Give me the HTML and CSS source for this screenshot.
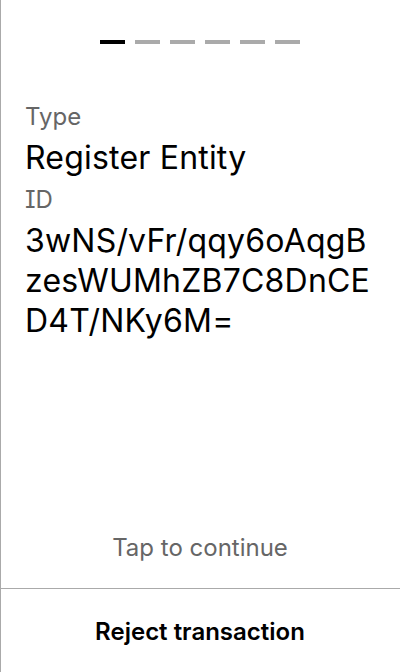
FILE: index.html
```html
<!DOCTYPE html>
<html>
<head>
<meta charset="utf-8">
<link rel="stylesheet" href="styles.css">
</head>
<body>
<div class="screen">
  <div class="steps">
    <span class="step active"></span>
    <span class="step"></span>
    <span class="step"></span>
    <span class="step"></span>
    <span class="step"></span>
    <span class="step"></span>
  </div>
  <div class="content">
    <div class="label">Type</div>
    <div class="value">Register Entity</div>
    <div class="label">ID</div>
    <div class="value id">3wNS/vFr/qqy6oAqgBzesWUMhZB7C8DnCED4T/NKy6M=</div>
  </div>
  <div class="tap">Tap to continue</div>
  <div class="reject">Reject transaction</div>
</div>
</body>
</html>
```
FILE: styles.css
```css
* { box-sizing: border-box; }
html, body { margin: 0; padding: 0; background: #fff; }
body { font-family: Inter, "Noto Sans", sans-serif; font-feature-settings: "cv08"; color: #000; }
.screen {
  height: 672px;
  width: 400px;
  border-left: 1px solid #aaa;
  display: flex;
  flex-direction: column;
}
.steps {
  display: flex;
  justify-content: center;
  gap: 10px;
  padding-top: 40px;
  margin-left: -1px;
}
.step { width: 25px; height: 4px; background: #aaa; }
.step.active { background: #000; }
.content {
  flex: 1;
  padding: 51px 24px 0 24px;
}
.label { font-size: 24px; line-height: 43px; color: #666; }
.value { font-size: 32px; line-height: 40px; color: #000; letter-spacing: 0.2px; }
.value.id { word-break: break-all; }
.tap {
  text-align: center;
  font-size: 24px;
  line-height: 32px;
  color: #666;
  padding-bottom: 24px;
  margin-left: -1px;
}
.reject {
  border-top: 1px solid #aaa;
  height: 84px;
  padding-top: 2px;
  display: flex;
  align-items: center;
  justify-content: center;
  font-size: 24px;
  font-weight: 600;
  margin-left: -1px;
}
```
